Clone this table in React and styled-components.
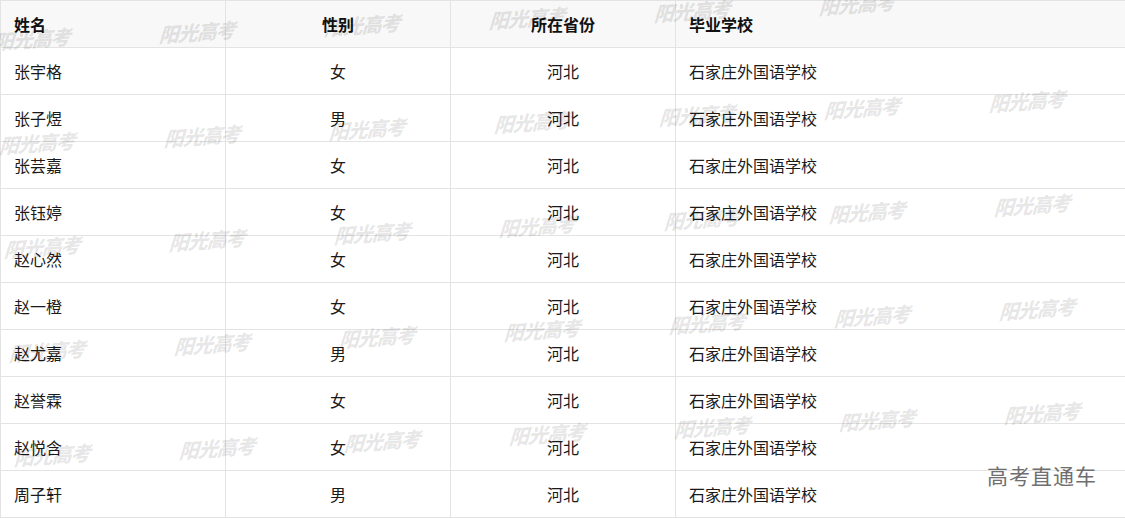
import React from "react";
import styled, { createGlobalStyle } from "styled-components";

const GlobalStyle = createGlobalStyle`
  html, body { margin: 0; padding: 0; background: #fff; }
  body { font-family: "Noto Sans CJK SC", "Noto Sans", sans-serif; color: #1a1a1a; }
`;

const Wrap = styled.div`
  position: relative;
  width: 1125px;
  overflow: hidden;
`;

const Table = styled.table`
  width: 1125px;
  border-collapse: collapse;
  table-layout: fixed;
  font-size: 16px;
`;

const HeadRow = styled.tr`
  background: #f8f8f8;
`;

const Th = styled.th`
  height: 47px;
  padding: 0 13px;
  border: 1px solid #e3e3e3;
  font-weight: bold;
  color: #111;
  text-align: ${(p) => p.$align || "left"};
  box-sizing: border-box;
`;

const Td = styled.td`
  height: 47px;
  padding: 0 13px;
  border: 1px solid #e3e3e3;
  color: #1a1a1a;
  text-align: ${(p) => p.$align || "left"};
  box-sizing: border-box;
  white-space: nowrap;
`;

const WatermarkLayer = styled.div`
  position: absolute;
  inset: 0;
  pointer-events: none;
  overflow: hidden;
`;

const Mark = styled.span`
  position: absolute;
  font-family: "Liberation Serif", "Noto Sans CJK SC", serif;
  font-weight: 900;
  font-style: italic;
  font-size: 20px;
  color: rgba(0, 0, 0, 0.1);
  transform: rotate(-4deg) skewX(-8deg);
  white-space: nowrap;
  letter-spacing: -1px;
`;

const Corner = styled.div`
  position: absolute;
  right: 28px;
  bottom: 28px;
  font-size: 21px;
  color: #6f6f6f;
  letter-spacing: 1px;
  pointer-events: none;
`;

const rows = [
  ["张宇格", "女"],
  ["张子煜", "男"],
  ["张芸嘉", "女"],
  ["张钰婷", "女"],
  ["赵心然", "女"],
  ["赵一橙", "女"],
  ["赵尤嘉", "男"],
  ["赵誉霖", "女"],
  ["赵悦含", "女"],
  ["周子轩", "男"],
];

const marks = [];
for (let c = 0; c < 7; c++) {
  for (let r = 0; r < 5; r++) {
    const x = c * 165 + r * 5 - 6;
    const y = 24 + r * 104 - c * 7;
    if (y > -12) marks.push({ x, y, key: `${c}-${r}` });
  }
}

export default function App() {
  return (
    <>
      <GlobalStyle />
      <Wrap>
        <Table>
          <colgroup>
            <col style={{ width: 225 }} />
            <col style={{ width: 225 }} />
            <col style={{ width: 225 }} />
            <col style={{ width: 450 }} />
          </colgroup>
          <thead>
            <HeadRow>
              <Th>姓名</Th>
              <Th $align="center">性别</Th>
              <Th $align="center">所在省份</Th>
              <Th>毕业学校</Th>
            </HeadRow>
          </thead>
          <tbody>
            {rows.map(([name, sex]) => (
              <tr key={name}>
                <Td>{name}</Td>
                <Td $align="center">{sex}</Td>
                <Td $align="center">河北</Td>
                <Td>石家庄外国语学校</Td>
              </tr>
            ))}
          </tbody>
        </Table>
        <WatermarkLayer>
          {marks.map((m) => (
            <Mark key={m.key} style={{ left: m.x, top: m.y }}>
              阳光高考
            </Mark>
          ))}
        </WatermarkLayer>
        <Corner>高考直通车</Corner>
      </Wrap>
    </>
  );
}
